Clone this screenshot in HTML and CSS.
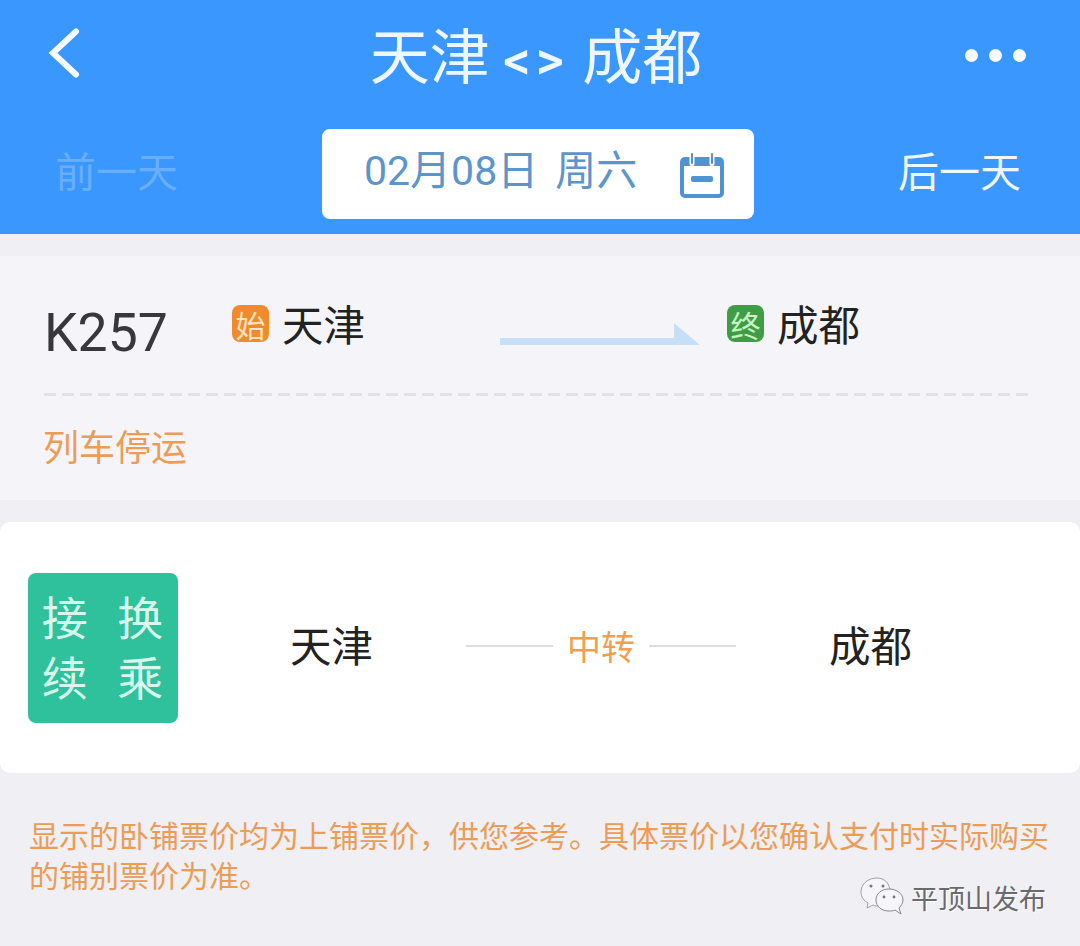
FILE: index.html
```html
<!DOCTYPE html>
<html lang="zh-CN">
<head>
<meta charset="utf-8">
<title>天津 &lt;&gt; 成都</title>
<link rel="stylesheet" href="styles.css">
</head>
<body>
<div class="page">
  <header class="header">
    <div class="topbar">
      <div class="side"><svg class="back" width="34" height="50" viewBox="0 0 34 50"><path d="M30 3.5 L7 25 L30 46.5" fill="none" stroke="#f6fbff" stroke-width="6" stroke-linecap="round"/></svg></div>
      <h1 class="title">天津 <span class="sym">&lt;&gt;</span> 成都</h1>
      <div class="side end-side"><div class="dots"><i></i><i></i><i></i></div></div>
    </div>
    <div class="datebar">
      <span class="day prev">前一天</span>
      <div class="datebox">
        <span class="date">02月08日 周六</span>
        <svg class="cal" width="44" height="46" viewBox="0 0 44 46">
          <rect x="2" y="7" width="40" height="37" rx="3" fill="none" stroke="#4f93d3" stroke-width="4"/>
          <rect x="2" y="7" width="40" height="7" fill="#4f93d3"/>
          <rect x="9.5" y="1" width="5" height="13" rx="2.5" fill="#fff"/>
          <rect x="29.5" y="1" width="5" height="13" rx="2.5" fill="#fff"/>
          <rect x="11" y="1" width="2" height="11" rx="1" fill="#4f93d3"/>
          <rect x="31" y="1" width="2" height="11" rx="1" fill="#4f93d3"/>
          <rect x="11" y="24" width="22" height="6" rx="2" fill="#4f93d3"/>
        </svg>
      </div>
      <span class="day next">后一天</span>
    </div>
  </header>

  <section class="train">
    <div class="train-row">
      <span class="code">K257</span>
      <div class="station start"><span class="badge orange">始</span><span class="st-name">天津</span></div>
      <svg class="arrow" width="202" height="26" viewBox="0 0 202 26"><path d="M1 25 V18 H175 V3 L201 25 Z" fill="#c7dff6"/></svg>
      <div class="station end"><span class="badge green">终</span><span class="st-name">成都</span></div>
    </div>
    <div class="dash"></div>
    <div class="status">列车停运</div>
  </section>

  <section class="transfer">
    <div class="tag"><span>接</span><span>换</span><span>续</span><span>乘</span></div>
    <span class="city from">天津</span>
    <div class="via"><i></i><span>中转</span><i></i></div>
    <span class="city to">成都</span>
  </section>

  <p class="note"><span>显示的卧铺票价均为上铺票价，供您参考。具体票价以您确认支付时实际购买</span><span>的铺别票价为准。</span></p>

  <div class="mark">
    <svg class="mark-icon" width="44" height="38" viewBox="0 0 44 38">
      <path d="M17 1 C8 1 1 7 1 15 C1 20 4 24 8 26 L7 31 L13 28 C15 29 17 29 19 29 L30 15 C30 7 25 1 17 1 Z" fill="#f6f6f8" stroke="#a0a0a4" stroke-width="1"/>
      <path d="M29 12 C21 12 16 17 16 23 C16 29 21 34 29 34 C31 34 33 34 35 33 L41 37 L39 31 C41 29 43 26 43 23 C43 17 37 12 29 12 Z" fill="#f6f6f8" stroke="#88888c" stroke-width="1"/>
      <circle cx="11" cy="9" r="1.5" fill="#77777b"/><circle cx="23" cy="9" r="1.5" fill="#77777b"/>
      <circle cx="24" cy="20" r="1.4" fill="#77777b"/><circle cx="34" cy="20" r="1.4" fill="#77777b"/>
    </svg>
    <span>平顶山发布</span>
  </div>
</div>
</body>
</html>
```

FILE: styles.css
```css
* { box-sizing: border-box; }
html, body { margin: 0; padding: 0; }
body {
  width: 1080px;
  height: 946px;
  overflow: hidden;
  background: #efeff4;
  font-family: "Noto Sans CJK SC", "Roboto", sans-serif;
}
.page { position: relative; height: 946px; }

.header { height: 234px; background: #3a97fd; }
.topbar {
  height: 112px;
  padding: 0 54px 0 46px;
  display: grid;
  grid-template-columns: 1fr auto 1fr;
  align-items: center;
}
.side { display: flex; align-items: center; }
.end-side { justify-content: flex-end; }
.back { flex: none; margin-top: -6px; }
.title {
  margin: 2px 0 0;
  font-size: 60px;
  line-height: 70px;
  font-weight: 400;
  color: #eef7ff;
  white-space: nowrap;
}
.sym { font-family: "Roboto", sans-serif; font-weight: 500; font-size: 54px; letter-spacing: 5px; }
.dots { display: flex; gap: 11px; margin-top: -2px; }
.dots i { width: 13px; height: 13px; border-radius: 50%; background: #f6fbff; }

.datebar {
  height: 90px;
  margin-top: 17px;
  padding: 0 59px 0 55px;
  display: flex;
  align-items: center;
  justify-content: space-between;
}
.day { font-size: 41px; line-height: 50px; font-weight: 400; color: #eef7ff; margin-top: -10px; }
.day.prev { color: #68aefb; }
.datebox {
  width: 432px;
  height: 90px;
  padding: 0 30px 0 42px;
  background: #fff;
  border-radius: 8px;
  display: flex;
  align-items: center;
  justify-content: space-between;
}
.date {
  font-family: "Roboto", "Noto Sans CJK SC", sans-serif;
  font-size: 41px;
  line-height: 50px;
  font-weight: 400;
  color: #5b95cc;
  white-space: nowrap;
  word-spacing: 7px;
  margin-top: -6px;
}
.cal { flex: none; margin-top: 2px; }

.train {
  height: 244px;
  margin-top: 22px;
  padding: 0 44px;
  background: #f5f5f9;
}
.train-row {
  height: 137px;
  display: flex;
  align-items: center;
}
.dash {
  width: 990px;
  height: 3px;
  margin-right: -2px;
  background: repeating-linear-gradient(90deg, #e2e2e6 0 12px, transparent 12px 18px);
}
.code {
  width: 188px;
  flex: none;
  font-family: "Roboto", sans-serif;
  font-size: 53.5px;
  line-height: 60px;
  color: #38383a;
  margin-top: 16px;
}
.station { display: flex; align-items: center; gap: 13px; margin-top: -4px; }
.station.start { width: 267px; flex: none; }
.station.end { margin-left: 26px; }
.badge {
  width: 37px;
  height: 37px;
  border-radius: 8px;
  display: flex;
  align-items: center;
  justify-content: center;
  font-size: 30px;
  line-height: 36px;
  font-weight: 400;
  color: #fde3c0;
  margin-top: 2px;
}
.badge.orange { background: #ef8b2d; }
.badge.green { background: #3f9e45; color: #c9f2c6; }
.st-name { font-size: 41.5px; line-height: 50px; font-weight: 400; color: #222; }
.arrow { flex: none; margin-top: 16px; }
.status {
  margin: 24px 0 0 -1px;
  font-size: 36px;
  line-height: 50px;
  font-weight: 400;
  color: #ec9c55;
}

.transfer {
  height: 251px;
  margin-top: 22px;
  padding-left: 28px;
  background: #fff;
  border-radius: 10px;
  display: flex;
  align-items: center;
}
.tag {
  flex: none;
  width: 150px;
  height: 150px;
  padding: 12px 14px 20px 13px;
  border-radius: 8px;
  background: #2fc19b;
  display: grid;
  grid-template-columns: 1fr 1fr;
  grid-template-rows: 1fr 1fr;
  column-gap: 28px;
  align-items: center;
  justify-items: center;
  font-size: 46px;
  line-height: 60px;
  font-weight: 400;
  color: #d8f8ec;
}
.city {
  flex: none;
  font-size: 41.5px;
  line-height: 50px;
  font-weight: 400;
  color: #222;
  margin-top: -8px;
}
.city.from { margin-left: 112px; }
.city.to { margin-left: 93px; }
.via {
  flex: none;
  margin-left: 93px;
  width: 270px;
  display: flex;
  align-items: center;
  gap: 14px;
  font-size: 34px;
  line-height: 44px;
  font-weight: 400;
  color: #ef9f4d;
  margin-top: -4px;
}
.via i { flex: 1; height: 2px; background: #dddde0; }
.via span { flex: none; }

.note {
  margin: 41px 0 0;
  padding: 0 29px;
  font-size: 30px;
  line-height: 40px;
  font-weight: 400;
  color: #ec9c55;
}
.note span { display: block; width: fit-content; white-space: nowrap; }

.mark {
  position: absolute;
  left: 860px;
  top: 878px;
  display: flex;
  align-items: center;
  gap: 7px;
  font-size: 27px;
  line-height: 40px;
  font-weight: 400;
  color: #6a6a6e;
  text-shadow: 1px 1px 0 #fff;
}
.mark-icon { margin-top: -4px; }
```
